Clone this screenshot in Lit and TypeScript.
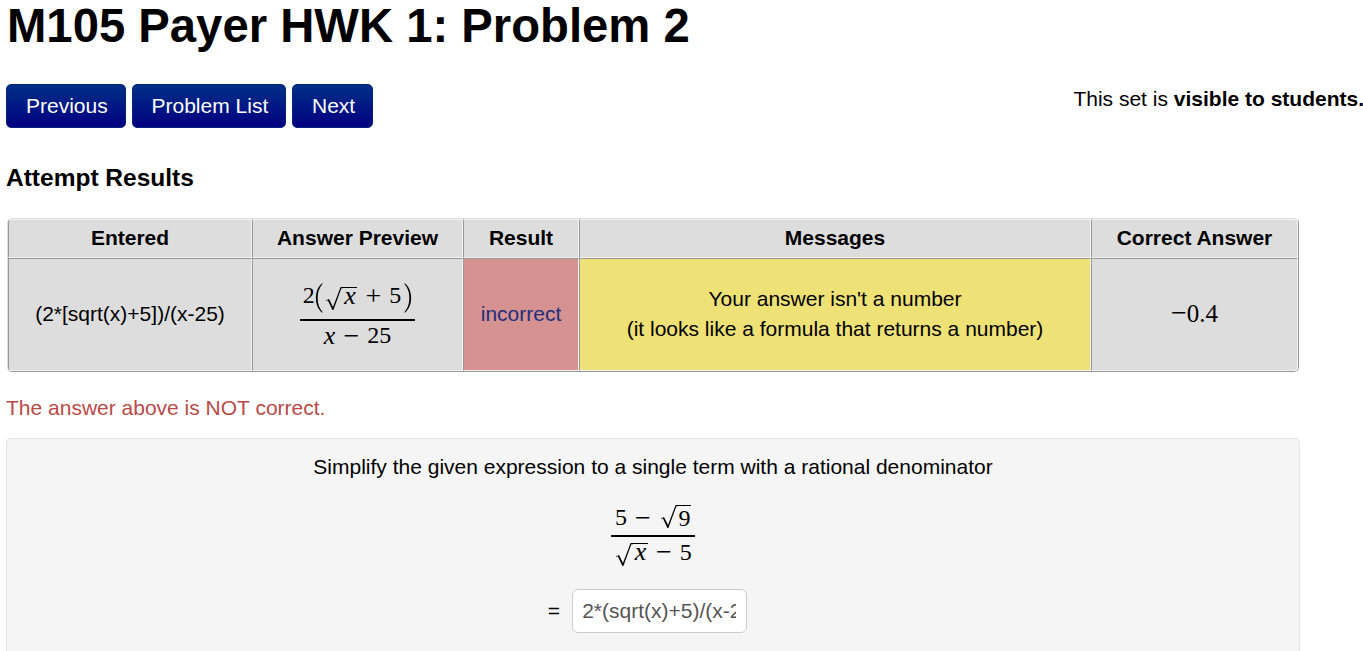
import { LitElement, html, css } from "lit";
import { customElement } from "lit/decorators.js";

const radical = () => html`<svg class="rad" width="19" height="23" viewBox="0 0 19 23" aria-hidden="true"><path d="M2 13.6 L5 12 L9 20 L16.6 0 L19 0 L19 1.2 L17.4 1.2 L9.4 23 L8.4 23 L3.8 13.2 L2.3 14.2 Z" fill="#000"/></svg>`;

const paren = (flip: boolean) => html`<svg class=${flip ? "paren flip" : "paren"} width="8" height="30" viewBox="0 0 9 36" preserveAspectRatio="none" aria-hidden="true"><path d="M8 0.4 C3 5 1 11 1 18 C1 25 3 31 8 35.6 L8.6 35 C4.6 30 3 25 3 18 C3 11 4.6 6 8.6 1 Z" fill="#000"/></svg>`;

@customElement("app-root")
export class AppRoot extends LitElement {
  static styles = css`
    :host {
      display: block;
      height: 651px;
      overflow: hidden;
      background: #fff;
      color: #000;
      font-family: "Liberation Sans", Arial, sans-serif;
      font-size: 21px;
      line-height: 30px;
    }
    .page { padding: 0 0 0 6px; }
    h1 {
      margin: 0;
      padding-left: 1px;
      font-size: 47.25px;
      line-height: 51px;
      font-weight: 700;
    }
    .nav {
      display: flex;
      justify-content: space-between;
      align-items: flex-start;
      margin-top: 33px;
      margin-right: -1px;
    }
    .btns { display: flex; gap: 6px; }
    .btn {
      box-sizing: border-box;
      height: 44px;
      padding: 0 16.8px 0 19px;
      display: flex;
      align-items: center;
      color: #fff;
      border: 1px solid #00247a;
      border-radius: 5px;
      background: linear-gradient(to bottom, #003087, #000080);
    }
    h2 {
      margin: 35px 0 0;
      font-size: 24.5px;
      line-height: 30px;
      font-weight: 700;
    }
    table {
      box-sizing: border-box;
      width: 1292px;
      margin: 25px 0 0 1px;
      table-layout: fixed;
      border-collapse: separate;
      border-spacing: 0;
      border: 1px solid;
      border-color: #ddd #999 #999 #ddd;
      border-radius: 5px;
      background: #fff;
    }
    th, td {
      box-sizing: border-box;
      padding: 0;
      text-align: center;
      vertical-align: middle;
      background: #ddd;
      border: 1px solid;
      border-color: #999 #f2f2f2 #f2f2f2 #999;
      line-height: 30px;
    }
    th { height: 39px; font-weight: 700; border-top-color: #f5f5f5; padding-bottom: 2px; }
    td { height: 113px; }
    td.txt { padding-bottom: 2px; }
    th:first-child { border-top-left-radius: 4px; }
    th:last-child { border-top-right-radius: 4px; }
    td:first-child { border-bottom-left-radius: 4px; }
    td:last-child { border-bottom-right-radius: 4px; }
    .bad { background: #d69191; color: #1c2f7a; }
    .msg { background: #eee175; }
    .math {
      font-family: "Liberation Serif", "Times New Roman", serif;
      font-size: 24px;
      color: #000;
    }
    .frac {
      display: flex;
      flex-direction: column;
      width: fit-content;
      margin: 0 auto;
    }
    .row {
      display: flex;
      justify-content: center;
      align-items: flex-start;
      padding: 0 3px;
      white-space: nowrap;
    }
    .row > span { height: 23px; line-height: 25px; }
    .num { padding-bottom: 7px; }
    .den { padding-top: 6px; }
    .preview .num { padding-bottom: 13px; }
    .preview .den { padding-top: 2px; }
    .bar { height: 2px; background: #000; }
    .v { font-style: italic; font-size: 26px; }
    .op { margin: 0 8px; font-size: 28px; }
    .rad, .paren { display: block; flex: none; }
    .paren { margin-bottom: -7px; }
    .flip { transform: scaleX(-1); margin-left: 3px; }
    .root { display: flex; align-items: flex-start; }
    .sq {
      box-sizing: border-box;
      height: 23px;
      border-top: 1px solid #000;
      padding: 0 0.5px;
    }
    .sq.v { padding: 0 1.5px; }
    .preview .root { margin: 4px 0 -4px 1px; }
    .preview .sq { line-height: 15px; }
    .well .den > span { line-height: 18px; }
    .well .den .sq { line-height: 16px; }
    .answer-num { font-size: 25px; }
    .answer-num .minus { font-size: 28px; line-height: 20px; }
    .wrong { margin-top: 21px; color: #b94a48; }
    .well {
      box-sizing: border-box;
      width: 1294px;
      min-height: 240px;
      margin-top: 15px;
      padding: 13px 19px;
      background: #f5f5f5;
      border: 1px solid #e6e6e6;
      border-radius: 4px;
      text-align: center;
    }
    .well-math { margin-top: 23px; }
    .answer {
      display: flex;
      justify-content: center;
      align-items: center;
      gap: 12px;
      margin-top: 23px;
      padding-right: 11px;
    }
    input {
      box-sizing: border-box;
      width: 175px;
      height: 44px;
      padding: 0 10px 0 9px;
      border: 1px solid #ccc;
      border-radius: 6px;
      background: #fff;
      color: #555;
      font: inherit;
      outline: none;
    }
  `;

  render() {
    return html`
      <div class="page">
        <h1>M105 Payer HWK 1: Problem 2</h1>
        <div class="nav">
          <div class="btns">
            <div class="btn">Previous</div>
            <div class="btn">Problem List</div>
            <div class="btn">Next</div>
          </div>
          <div>This set is <b>visible to students.</b></div>
        </div>
        <h2>Attempt Results</h2>
        <table>
          <colgroup>
            <col style="width:244px" /><col style="width:211px" /><col style="width:116px" /><col style="width:512px" /><col style="width:207px" />
          </colgroup>
          <thead>
            <tr><th>Entered</th><th>Answer Preview</th><th>Result</th><th>Messages</th><th>Correct Answer</th></tr>
          </thead>
          <tbody>
            <tr>
              <td class="txt">(2*[sqrt(x)+5])/(x-25)</td>
              <td class="preview">
                <div class="math frac">
                  <div class="row num">
                    <span>2</span>${paren(false)}
                    <span class="root">${radical()}<span class="sq v">x</span></span>
                    <span class="op">+</span><span>5</span>${paren(true)}
                  </div>
                  <div class="bar"></div>
                  <div class="row den"><span class="v">x</span><span class="op">−</span><span>25</span></div>
                </div>
              </td>
              <td class="txt bad">incorrect</td>
              <td class="txt msg">Your answer isn't a number<br />(it looks like a formula that returns a number)</td>
              <td><span class="math answer-num"><span class="minus">−</span>0.4</span></td>
            </tr>
          </tbody>
        </table>
        <div class="wrong">The answer above is NOT correct.</div>
        <div class="well">
          <div>Simplify the given expression to a single term with a rational denominator</div>
          <div class="well-math">
            <div class="math frac">
              <div class="row num"><span>5</span><span class="op">−</span><span class="root">${radical()}<span class="sq">9</span></span></div>
              <div class="bar"></div>
              <div class="row den"><span class="root">${radical()}<span class="sq v">x</span></span><span class="op">−</span><span>5</span></div>
            </div>
          </div>
          <div class="answer"><span>=</span><input .value=${"2*(sqrt(x)+5)/(x-25)"} /></div>
        </div>
      </div>
    `;
  }
}
